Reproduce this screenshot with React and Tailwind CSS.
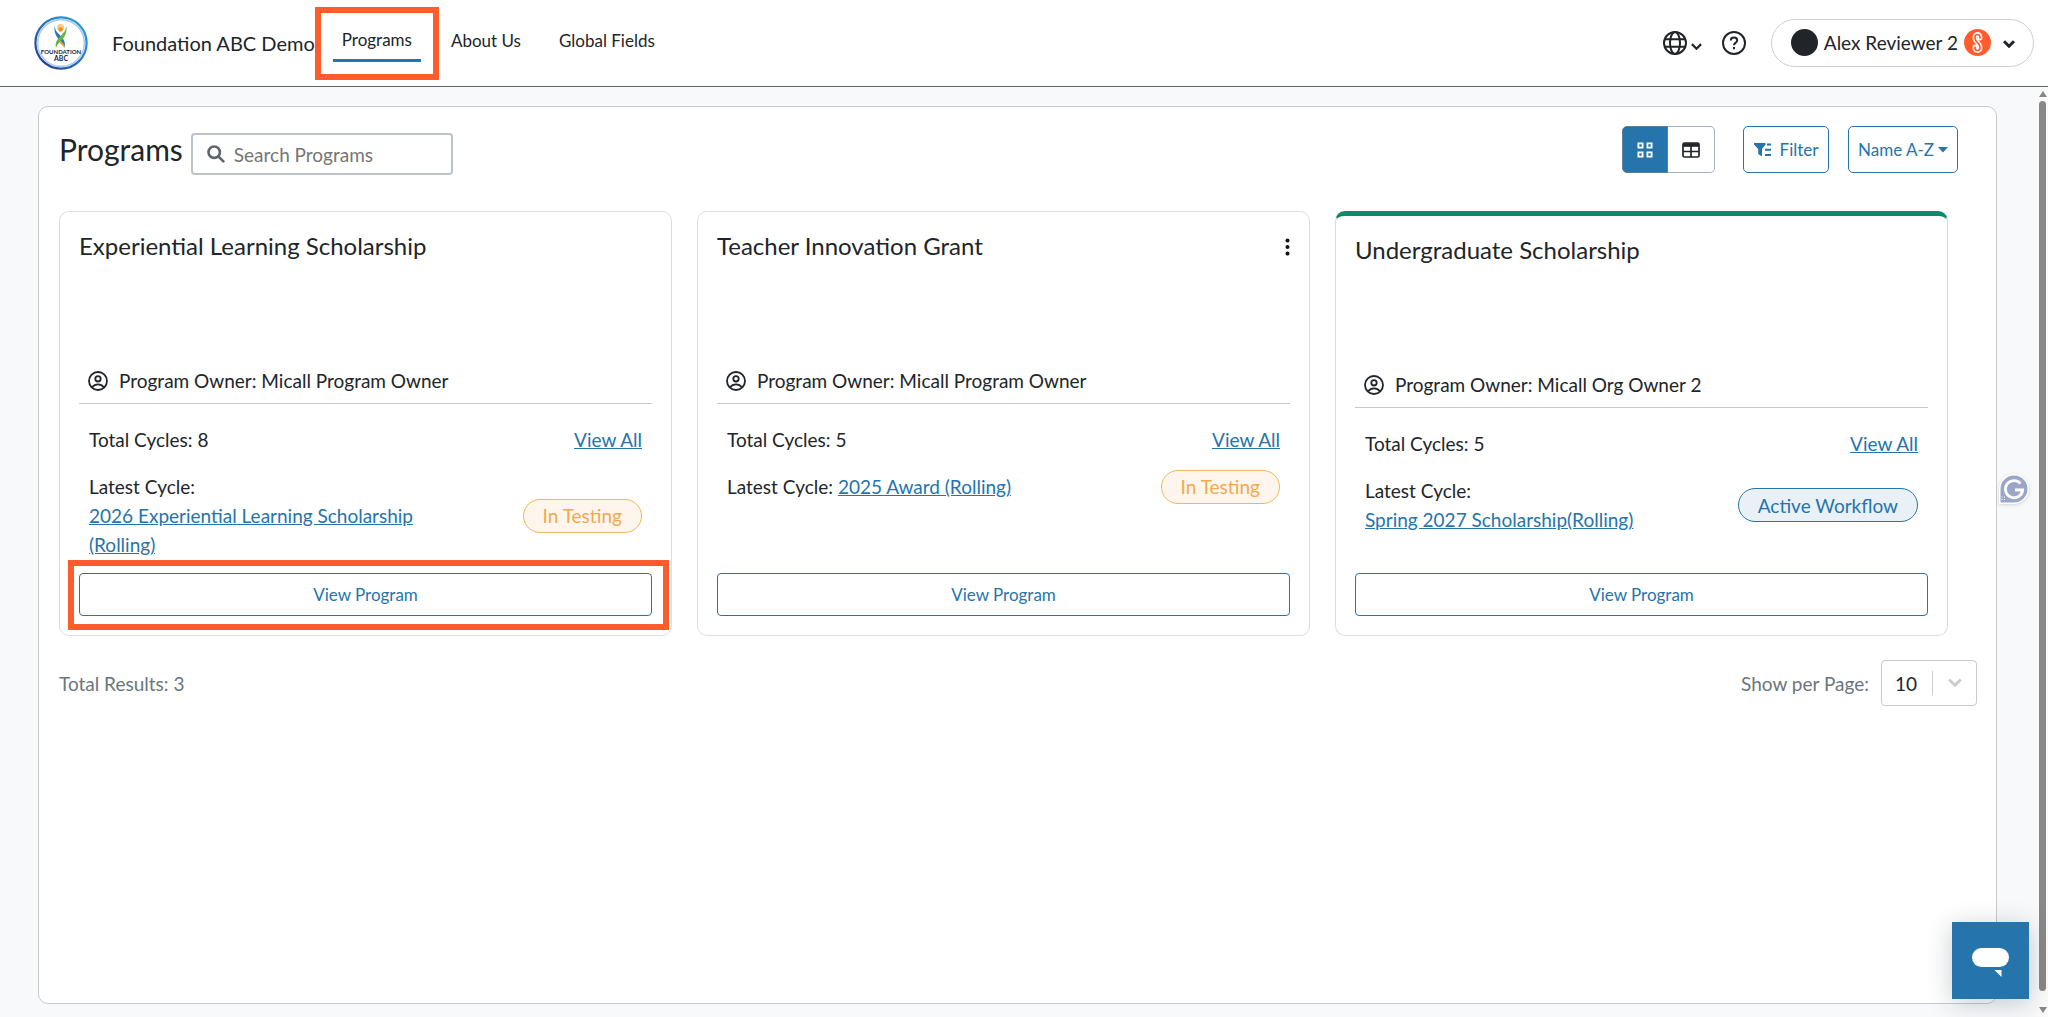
import React from "react";

const programs = [
  { name: "Experiential Learning Scholarship", owner: "Micall Program Owner", total: 8, cycle: "2026 Experiential Learning Scholarship (Rolling)", status: "In Testing", highlight: true },
  { name: "Teacher Innovation Grant", owner: "Micall Program Owner", total: 5, cycle: "2025 Award (Rolling)", status: "In Testing", menu: true },
  { name: "Undergraduate Scholarship", owner: "Micall Org Owner 2", total: 5, cycle: "Spring 2027 Scholarship(Rolling)", status: "Active Workflow", active: true },
];

function Logo() {
  return (
    <svg viewBox="0 0 54 54" className="size-[54px]" role="img" aria-label="Foundation ABC">
      <defs>
        <linearGradient id="ring" x1="1" y1="0" x2="0" y2="1">
          <stop offset="0" stopColor="#2fa4dc" />
          <stop offset="0.5" stopColor="#2b72bb" />
          <stop offset="1" stopColor="#252f83" />
        </linearGradient>
      </defs>
      <circle cx="27" cy="27" r="25.6" fill="#fff" stroke="url(#ring)" strokeWidth="2.2" />
      <circle cx="27" cy="27" r="23.4" fill="none" stroke="#a9cdec" strokeWidth="1.6" />
      <circle cx="26.6" cy="11.500" r="3.4" fill="#fbc878" />
      <circle cx="26.6" cy="13.500" r="2.2" fill="#f08a24" />
      <path d="M20.500 9.500c.5 5.500 3.500 7.500 5.800 10 3.200 3.500 5.600 6.500 4.200 12-1.400-4.500-4.600-6.500-6.800-9.500-2.500-3.500-3.900-8-3.200-12.500Z" fill="#2478be" />
      <path d="M32.500 9.500c-.5 5.500-3.500 7.500-5.800 10.500-3.200 3.500-6 6-4.700 12 1.300-4.500 4.900-6.500 7.300-9.500 2.500-3.500 3.900-8.500 3.200-13Z" fill="#6db33f" />
      <path d="M27 25.500c3 2 4 4 3.500 7-1-2.500-2.700-4-5-5.300Z" fill="#f39a2b" />
      <text x="27" y="38" textAnchor="middle" fontSize="6" fontWeight="700" fill="#1c2348" fontFamily="Lato, sans-serif">FOUNDATION</text>
      <text x="27" y="44.500" textAnchor="middle" fontSize="7" fontWeight="700" fill="#1c2348" fontFamily="Lato, sans-serif">ABC</text>
    </svg>
  );
}

function GlobeIcon() {
  return (
    <svg viewBox="0 0 24 24" className="size-6" fill="none" stroke="currentColor" strokeWidth="2" aria-hidden="true">
      <circle cx="12" cy="12" r="11" />
      <ellipse cx="12" cy="12" rx="5" ry="11" />
      <path d="M2 8.300h20M2 15.700h20" />
    </svg>
  );
}

function Chevron({ className }) {
  return (
    <svg viewBox="0 0 12 8" className={className} fill="none" stroke="currentColor" strokeWidth="2.4" aria-hidden="true">
      <path d="M1 1.200l5 5 5-5" />
    </svg>
  );
}

function HelpIcon() {
  return (
    <svg viewBox="0 0 24 24" className="size-6" fill="none" stroke="currentColor" strokeWidth="2" aria-hidden="true">
      <circle cx="12" cy="12" r="11" />
      <path d="M8.800 9.600c0-1.900 1.400-3 3.200-3s3.200 1.100 3.200 2.800c0 2.200-3.200 2.300-3.200 4.800" />
      <path d="M12 16v2.200" />
    </svg>
  );
}

function BrandMark() {
  const s = "M16 9V8a2.500 2.500 0 0 0-5 0v1.500c0 3 5 5 5 8.500V19a2.500 2.500 0 0 1-5 0v-1";
  return (
    <svg viewBox="0 0 27 27" className="size-[27px]" fill="none" strokeLinecap="round" aria-hidden="true">
      <circle cx="13.500" cy="13.500" r="13.500" fill="#ff5c2e" />
      <path d={s} stroke="#fff" strokeWidth="4.800" />
      <path d={s} stroke="#ff5c2e" strokeWidth="1.700" />
    </svg>
  );
}

function OwnerIcon() {
  return (
    <svg viewBox="0 0 20 20" className="size-5 shrink-0" fill="none" stroke="currentColor" strokeWidth="1.800" aria-hidden="true">
      <circle cx="10" cy="10" r="9" />
      <circle cx="10" cy="7.800" r="2.700" />
      <path d="M4 16.300c1.500-2 3.500-3 6-3s4.500 1 6 3" />
    </svg>
  );
}

function Header() {
  return (
    <header className="flex h-[87px] shrink-0 items-center border-b border-[#5b6770] bg-white pr-[14px] pb-px pl-[34px]">
      <Logo />
      <div className="ml-6 text-xl whitespace-nowrap">Foundation ABC Demo</div>
      <nav aria-label="Main" className="flex items-center gap-3 text-[17px] whitespace-nowrap">
        <div className="mt-px flex h-[73px] items-center border-[6px] border-[#ff5c2e] px-3">
          <a href="#programs" className="border-b-[3px] border-[#2574ab] px-[9px] pb-[5px]">Programs</a>
        </div>
        <a href="#about" className="-mt-1">About Us</a>
        <a href="#fields" className="-mt-1 ml-[26px]">Global Fields</a>
      </nav>
      <div className="ml-auto flex items-center">
        <button type="button" aria-label="Language" className="flex items-center gap-1">
          <GlobeIcon />
          <Chevron className="mt-2 w-[11px]" />
        </button>
        <button type="button" aria-label="Help" className="ml-5">
          <HelpIcon />
        </button>
        <button type="button" className="ml-[25px] flex h-12 items-center rounded-full border border-[#cdcfd1] pr-[18px] pl-[19px] text-[19px] whitespace-nowrap">
          <span className="mr-[6px] size-[27px] rounded-full bg-[#212529]" />
          Alex Reviewer 2
          <span className="ml-[6px]"><BrandMark /></span>
          <svg viewBox="0 0 12 8" className="mt-[3px] ml-3 w-3" fill="none" stroke="currentColor" strokeWidth="3" aria-hidden="true">
            <path d="M1 1.200l5 5 5-5" />
          </svg>
        </button>
      </div>
    </header>
  );
}

function Toolbar() {
  return (
    <div className="mr-[19px] flex items-start">
      <h1 className="text-[30px] leading-[46px]">Programs</h1>
      <div className="mt-[7px] ml-2 flex h-[42px] w-[262px] items-center rounded border-2 border-[#bcc3c8] pl-[14px]">
        <svg viewBox="0 0 18 18" className="size-[18px] shrink-0" fill="none" stroke="#5b6770" strokeWidth="2.600" strokeLinecap="round" aria-hidden="true">
          <circle cx="7.200" cy="7.200" r="5.700" />
          <path d="M11.800 11.800l4.600 4.600" />
        </svg>
        <input type="search" aria-label="Search Programs" placeholder="Search Programs" className="ml-[9px] w-full min-w-0 text-[19px] outline-none placeholder:text-[#757575]" />
      </div>
      <div className="ml-auto flex h-[47px] text-[17px] whitespace-nowrap text-[#2574ab]">
        <button type="button" aria-label="Card view" className="flex w-[46px] items-center justify-center rounded-l-[5px] border border-[#5b7f95] bg-[#2574ab] text-white">
          <svg viewBox="0 0 16 16" className="size-4" fill="none" stroke="currentColor" strokeWidth="1.800" aria-hidden="true">
            <path d="M1.400 1.400h4.200v4.200H1.400zM10.400 1.400h4.200v4.200h-4.200zM1.400 10.400h4.200v4.200H1.400zM10.400 10.400h4.200v4.200h-4.200z" />
          </svg>
        </button>
        <button type="button" aria-label="Table view" className="flex w-[47px] items-center justify-center rounded-r-[5px] border border-l-0 border-[#a3b1b5] text-[#212529]">
          <svg viewBox="0 0 18 16" className="h-4 w-[18px]" fill="none" stroke="currentColor" strokeWidth="1.700" aria-hidden="true">
            <rect x="1" y="1" width="16" height="14" rx="1.500" />
            <path d="M1 3h16" strokeWidth="3.600" />
            <path d="M1 9.500h16M9 4v11" />
          </svg>
        </button>
        <button type="button" className="ml-7 flex w-[86px] items-center justify-center gap-2 rounded-[5px] border border-[#2574ab]">
          <svg viewBox="0 0 18 14" className="h-[14px] w-[18px]" fill="currentColor" aria-hidden="true">
            <path d="M0 0h11.500v1.500L8 6v7.500L4.200 11V6L0 1.500zM13 .5h4v2h-4zM11 5.800h6v2h-6zM11 11h6v2h-6z" />
          </svg>
          Filter
        </button>
        <button type="button" className="ml-[19px] flex w-[110px] items-center justify-center gap-1 rounded-[5px] border border-[#2574ab]">
          Name A-Z
          <svg viewBox="0 0 10 6" className="w-[10px]" fill="currentColor" aria-hidden="true"><path d="M0 0h10L5 5.500z" /></svg>
        </button>
      </div>
    </div>
  );
}

function ProgramCard({ program }) {
  const frame = program.active
    ? "flex h-[425px] min-w-0 flex-col rounded-[10px] border border-t-[5px] border-[#dcdee0] border-t-[#0f8a6e] px-[19px] pb-[19px]"
    : "flex h-[425px] min-w-0 flex-col rounded-[10px] border border-[#dcdee0] px-[19px] pb-[19px]";
  const badge = program.active
    ? "-my-[3px] flex h-[34px] items-center rounded-full border border-[#2574ab] bg-[#e9f1f7] px-[19px] whitespace-nowrap text-[#2574ab]"
    : "-my-[3px] flex h-[34px] items-center rounded-full border border-[#f3b55c] bg-[#fef6ec] px-[19px] whitespace-nowrap text-[#f2a94c]";
  return (
    <article className={frame}>
      <div className="flex h-[146px] items-start justify-between pt-[19px]">
        <h2 className="text-2xl leading-[30px]">{program.name}</h2>
        {program.menu && (
          <button type="button" aria-label="Program menu" className="mt-[7px]">
            <svg viewBox="0 0 5 18" className="h-[18px] w-[5px]" fill="#111" aria-hidden="true">
              <circle cx="2.500" cy="2.500" r="2" /><circle cx="2.500" cy="9" r="2" /><circle cx="2.500" cy="15.500" r="2" />
            </svg>
          </button>
        )}
      </div>
      <div className="flex h-[46px] items-center gap-[11px] border-b border-[#c5c7c9] px-[9px]">
        <OwnerIcon />
        <span>Program Owner: {program.owner}</span>
      </div>
      <div className="mt-[21px] flex justify-between px-[10px]">
        <span>Total Cycles: {program.total}</span>
        <a href="#cycles" className="text-[#2574ab] underline">View All</a>
      </div>
      <div className="mt-[18px] flex items-center justify-between px-[10px]">
        <div className="max-w-[360px]">
          Latest Cycle: <a href="#cycle" className="inline-block text-[#2574ab] underline">{program.cycle}</a>
        </div>
        <span className={badge}>{program.status}</span>
      </div>
      <div className="relative mt-auto flex">
        <button type="button" className="h-[43px] w-full rounded border border-[#2574ab] text-[17px] text-[#2574ab]">View Program</button>
        {program.highlight && <div className="pointer-events-none absolute -top-[13px] -right-[17px] -bottom-[14px] -left-[11px] border-[6px] border-[#ff5c2e]" />}
      </div>
    </article>
  );
}

function ResultsBar() {
  return (
    <div className="mt-6 flex items-center justify-between text-[#6c757d]">
      <span>Total Results: 3</span>
      <label className="flex items-center gap-3">
        Show per Page:
        <span className="relative flex h-[46px] w-24 items-center rounded border border-[#c8cacc]">
          <select className="h-full w-full appearance-none pl-[13px] text-[#212529] outline-none" defaultValue="10">
            <option>10</option>
            <option>25</option>
          </select>
          <span className="pointer-events-none absolute inset-y-[10px] right-0 flex w-[44px] items-center justify-center border-l border-[#cccccc] text-[#cccccc]">
            <Chevron className="w-[14px]" />
          </span>
        </span>
      </label>
    </div>
  );
}

function ScrollTrack() {
  return (
    <div className="flex w-[11px] shrink-0 flex-col items-center justify-between bg-[#fafafa] py-1 text-[#888888]" aria-hidden="true">
      <svg viewBox="0 0 8 6" className="w-2" fill="currentColor"><path d="M4 0l4 6H0z" /></svg>
      <div className="my-1 w-[7px] flex-1 rounded-full bg-[#888888]" />
      <svg viewBox="0 0 8 6" className="mt-3 w-2" fill="currentColor"><path d="M4 6l4-6H0z" /></svg>
    </div>
  );
}

export default function App() {
  return (
    <div className="relative flex h-screen flex-col overflow-hidden bg-[#f8f9fb] font-['Lato',sans-serif] text-[19px] leading-[29px] text-[#212529]">
      <Header />
      <div className="flex min-h-0 flex-1">
        <main className="mt-[19px] mr-10 mb-[13px] ml-[38px] flex-1 rounded-[10px] border border-[#c8cbce] bg-white p-5 pt-[19px] pr-[19px]">
          <Toolbar />
          <div className="mt-9 mr-[29px] grid grid-cols-3 gap-[25px]">
            {programs.map((p) => <ProgramCard key={p.name} program={p} />)}
          </div>
          <ResultsBar />
        </main>
        <ScrollTrack />
      </div>
      <button type="button" aria-label="Grammar check" className="absolute top-[474px] right-[19px]">
        <svg viewBox="0 0 30 30" className="size-[30px] drop-shadow" aria-hidden="true">
          <path d="M15 0a15 15 0 1 1 0 30H0V15A15 15 0 0 1 15 0z" fill="#fff" />
          <path d="M15 1.500a13.500 13.500 0 1 1 0 27H1.500V15A13.500 13.500 0 0 1 15 1.500z" fill="#9ba5c9" />
          <path d="M21.500 9.500A8.600 8.600 0 1 0 23.600 16H16" fill="none" stroke="#fff" strokeWidth="2.800" />
          <path d="M2.500 23h1M5 23h1M2.500 25.500h1M5 25.500h1" stroke="#fff" strokeWidth="1" />
        </svg>
      </button>
      <button type="button" aria-label="Open chat" className="absolute right-[19px] bottom-[18px] flex size-[77px] items-center justify-center bg-[#2574ab] pt-[3px] shadow-[0_4px_24px_rgba(0,30,40,0.22)]">
        <svg viewBox="0 0 37 29" className="w-[37px]" fill="#fff" aria-hidden="true">
          <rect width="37" height="19" rx="9.500" />
          <path d="M22.500 22h7v7z" />
        </svg>
      </button>
    </div>
  );
}
